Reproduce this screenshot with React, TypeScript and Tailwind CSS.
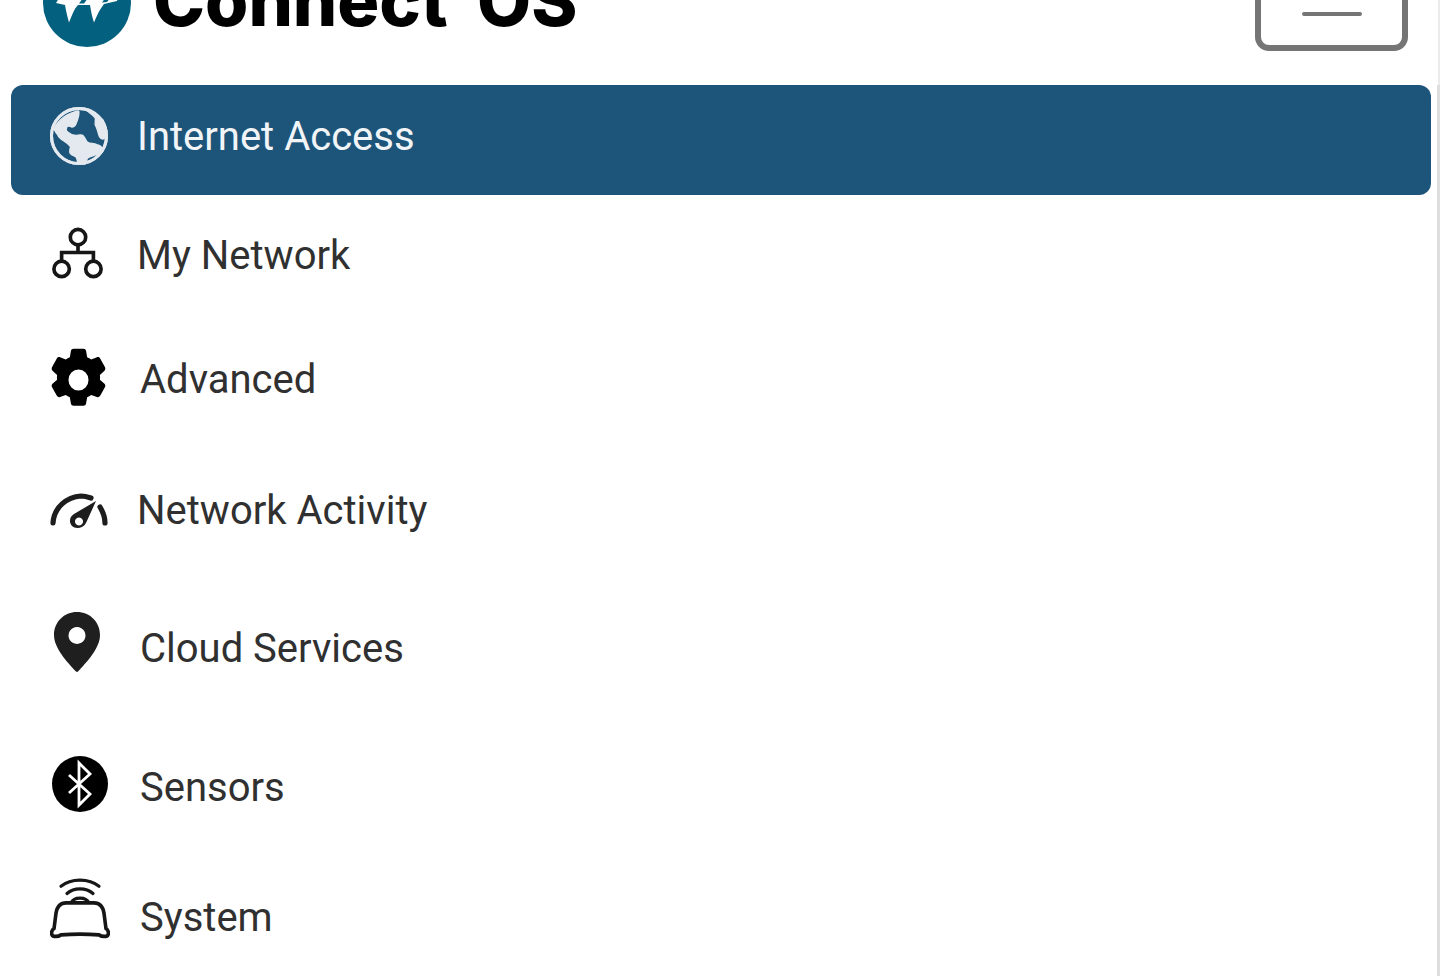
const font = { fontFamily: 'Roboto, sans-serif' };

function Globe() {
  return (
    <svg width="58" height="58" viewBox="0 0 58 58" className="shrink-0">
      <circle cx="29" cy="29" r="27.5" fill="#1d5479" stroke="#e3e9ef" strokeWidth="3" />
      <path d="M4 22 C8 13 17 6 28.700 4 C29.500 7 28 12 26 16.700 C25 19 24 20 22 20 C20 19 18 18.500 16.700 20 C16 22 16 24 17.300 24.700 C19 26 22 28 24.300 28.300 C27 29 30 27 32.700 28.300 C35 30 35.500 34 37.700 35.300 C40 37 44 36 46.700 37.700 C49 38 51 39 52 41 C50 45 48 47 46 47.700 C43 49 40 49 37.700 51 C36 53 36.500 55 35.300 56.700 C32 57 29 56.500 27.700 55.300 C27 52 27 50 25.300 49.300 C23 48.500 21 48 20 46 C19 43 21 41 20.300 39.300 C18 36 15 35 12.700 33.300 C10 31 8 30 7.700 27.700 C6 26 5 24 4 22 Z" fill="#e3e9ef" stroke="#e3e9ef" strokeWidth="1.400" strokeLinejoin="round" />
      <path d="M37.700 4.300 C44 6 49 9 52.700 12.700 C55 17 56.500 21 56.700 26 C56 29 55 31 53.300 32 C51 32 50 31 49.300 29.300 C48 26 47.500 22 46 19.300 C44 17 46 13 45.300 11 C43 8 40 6 37.700 4.300 Z" fill="#e3e9ef" stroke="#e3e9ef" strokeWidth="1.400" strokeLinejoin="round" />
      <circle cx="29" cy="29" r="27.500" fill="none" stroke="#e3e9ef" strokeWidth="3" />
    </svg>
  );
}

function Net() {
  return (
    <svg width="52" height="53" viewBox="0 0 54 54" fill="none" stroke="#161616" strokeWidth="3.800" className="shrink-0">
      <circle cx="27" cy="10" r="8" />
      <circle cx="10" cy="43" r="8" />
      <circle cx="43" cy="43" r="8" />
      <path d="M27 18 V26 M10 35 V26 H43 V35" />
    </svg>
  );
}

function Gear() {
  return (
    <svg width="65" height="68" viewBox="0 0 24 24" preserveAspectRatio="none" fill="#000" className="shrink-0">
      <path fillRule="evenodd" d="M10.200 1h3.600c.5 0 .9.3 1 .8l.4 2.200c.5.2 1 .5 1.500.8l2.100-.8c.4-.2.9 0 1.200.4l1.800 3.100c.2.4.1.9-.2 1.200l-1.700 1.500c.1.6.1 1.100 0 1.700l1.700 1.400c.3.3.4.8.2 1.200l-1.800 3.100c-.3.4-.8.6-1.200.4l-2.100-.7c-.5.3-1 .6-1.500.8l-.4 2.200c-.1.5-.5.8-1 .8h-3.600c-.5 0-.9-.3-1-.8l-.4-2.200c-.5-.2-1-.5-1.500-.8l-2.100.7c-.4.2-.9 0-1.200-.4l-1.800-3.100c-.2-.4-.1-.9.2-1.200l1.700-1.400c-.1-.6-.1-1.100 0-1.700l-1.700-1.500c-.3-.3-.4-.8-.2-1.200l1.800-3.100c.3-.4.8-.6 1.200-.4l2.100.8c.5-.3 1-.6 1.500-.8l.4-2.200c.1-.5.5-.8 1-.8ZM12 8.300a3.700 3.700 0 1 0 0 7.400 3.700 3.700 0 0 0 0-7.400Z" />
    </svg>
  );
}

function Gauge() {
  return (
    <svg width="58" height="36" viewBox="0 0 58 36" fill="none" className="shrink-0">
      <path d="M3 30 C4 14 17 4 31 3 C35 3 38 4 41 5" stroke="#1d1d1d" strokeWidth="5.200" strokeLinecap="round" />
      <path d="M50 14 C53 19 55 25 55 30" stroke="#1d1d1d" strokeWidth="5.200" strokeLinecap="round" />
      <path fillRule="evenodd" d="M46 8 L36 30 C33 36 25 36 22 33 C19 30 19 24 24 21 Z M29 24.500 a4 4 0 1 0 .01 0 Z" fill="#1d1d1d" />
    </svg>
  );
}

function Pin() {
  return (
    <svg width="46" height="60" viewBox="0 0 46 60" className="shrink-0">
      <path fillRule="evenodd" d="M23 0 C36 0 46 10 46 23 C46 36 33 50 24 59.500 C23.500 60 22.500 60 22 59.500 C13 50 0 36 0 23 C0 10 10 0 23 0 Z M23 15 a8.500 8.500 0 1 0 .01 0 Z" fill="#1f1f1f" />
    </svg>
  );
}

function Bt() {
  return (
    <svg width="56" height="56" viewBox="0 0 56 56" className="shrink-0">
      <circle cx="28" cy="28" r="28" fill="#000" />
      <path d="M17 19 L38 38 L27 49 V7 L38 18 L17 37" fill="none" stroke="#fff" strokeWidth="2.800" />
    </svg>
  );
}

function Router() {
  return (
    <svg width="60" height="62" viewBox="0 0 60 60" preserveAspectRatio="none" fill="none" stroke="#161616" className="shrink-0">
      <path d="M11 9 C21 1 39 1 49 9" strokeWidth="3.200" strokeLinecap="round" />
      <path d="M17 16 C24 10 36 10 43 16" strokeWidth="3.200" strokeLinecap="round" />
      <path d="M21 25 C24 19 36 19 39 25" strokeWidth="3.200" />
      <path d="M16 25 H44 C50 25 53 29 54 35 L56 50 C58 51 59 54 58 56 C57 58 52 58 49 56 C36 55 24 55 11 56 C8 58 3 58 2 56 C1 54 2 51 4 50 L6 35 C7 29 10 25 16 25 Z" strokeWidth="3.600" strokeLinejoin="round" />
    </svg>
  );
}

export default function App() {
  return (
    <div className="relative h-[976px] w-[1440px] overflow-hidden bg-white" style={font}>
      <header className="flex h-[85px] items-start justify-between pl-[43px] pr-[32px]">
        <div className="-mt-[41px] flex items-center">
          <div className="relative h-[88px] w-[88px] shrink-0 overflow-hidden rounded-full bg-[#03607f]">
            <svg width="88" height="88" viewBox="0 0 88 88" className="absolute inset-0">
              <path d="M13 44 L18 36 L76 36 L74 42 L61 45 C57 50 54 56 51 63.500 C49 58 48 52 47 46 L35 46 C31 50 29 56 26 63.500 C24.500 58 23 52 22 46 Z" fill="#fff" />
              <path d="M40 39 L45 39 L41 44.500 L36 44.500 Z M63 38 L68 38 L64 43 L59 43.500 Z" fill="#03607f" />
            </svg>
          </div>
          <div className="mb-[5px] ml-[22px] whitespace-nowrap text-[70px] leading-[72px] font-extrabold text-black [word-spacing:14px]" style={{ fontFamily: 'Inter, sans-serif' }}>Connect OS</div>
        </div>
        <button className="-mt-[30px] flex h-[81px] w-[153px] flex-col items-center justify-end rounded-[14px] border-[6px] border-[#757575] pb-[29px]">
          <span className="h-1 w-[60px] rounded-full bg-[#757575]" />
        </button>
      </header>
      <nav className="pl-[11px] pr-[9px] text-[40px] text-[#303030]">
        <div className="flex h-[110px] items-center rounded-[12px] bg-[#1d5479] pb-[9px] pl-[39px] text-[#f2f5f8]">
          <Globe />
          <span className="ml-[29px] pt-[2px] leading-none">Internet Access</span>
        </div>
        <div className="flex h-[120px] items-center pl-[41px]">
          <span className="mb-[4px]"><Net /></span>
          <span className="ml-[33px] pt-[2px] leading-none">My Network</span>
        </div>
        <div className="flex h-[128px] items-center pl-[35px]">
          <span className="mt-[2px]"><Gear /></span>
          <span className="ml-[29px] pt-[2px] leading-none">Advanced</span>
        </div>
        <div className="flex h-[134px] items-center pl-[39px]">
          <span className="mt-[2px]"><Gauge /></span>
          <span className="ml-[29px] pt-[2px] leading-none">Network Activity</span>
        </div>
        <div className="flex h-[142px] items-center pl-[43px]">
          <span className="mb-[12px]"><Pin /></span>
          <span className="ml-[40px] pt-[2px] leading-none">Cloud Services</span>
        </div>
        <div className="flex h-[136px] items-center pl-[41px]">
          <span className="mb-[6px]"><Bt /></span>
          <span className="ml-[32px] pt-[2px] leading-none">Sensors</span>
        </div>
        <div className="flex h-[124px] items-center pl-[39px]">
          <span className="mb-[18px]"><Router /></span>
          <span className="ml-[30px] pt-[2px] leading-none">System</span>
        </div>
      </nav>
      <div className="absolute right-0 top-0 h-[85px] w-[2px] bg-[#ebebeb]" />
      <div className="absolute right-0 top-[85px] bottom-0 w-[3px] bg-[#dedede]" />
    </div>
  );
}
